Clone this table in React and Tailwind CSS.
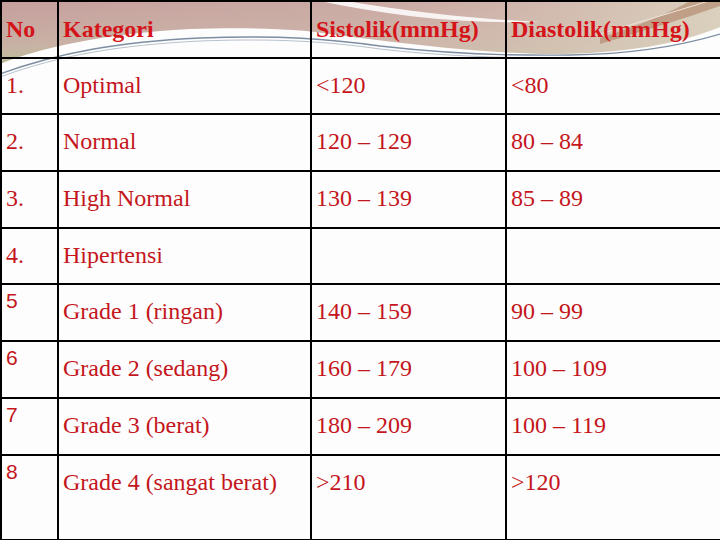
import React from "react";

const rows = [
  { no: "1.", kat: "Optimal", sis: "<120", dia: "<80", h: 56 },
  { no: "2.", kat: "Normal", sis: "120 – 129", dia: "80 – 84", h: 57 },
  { no: "3.", kat: "High Normal", sis: "130 – 139", dia: "85 – 89", h: 57 },
  { no: "4.", kat: "Hipertensi", sis: "", dia: "", h: 56 },
  { no: "5", kat: "Grade 1 (ringan)", sis: "140 – 159", dia: "90 – 99", h: 57, sans: true },
  { no: "6", kat: "Grade 2 (sedang)", sis: "160 – 179", dia: "100 – 109", h: 57, sans: true },
  { no: "7", kat: "Grade 3 (berat)", sis: "180 – 209", dia: "100 – 119", h: 57, sans: true },
  { no: "8", kat: "Grade 4 (sangat berat)", sis: ">210", dia: ">120", h: 85, sans: true },
];

// header swoosh from the slide theme
function HeaderWave() {
  return (
    <svg
      className="absolute left-0 top-0"
      width="720"
      height="80"
      viewBox="0 0 720 80"
    >
      <defs>
        <linearGradient id="band" x1="0" y1="0" x2="0" y2="1">
          <stop offset="0" stopColor="#c69e9c" />
          <stop offset="0.55" stopColor="#c8b0a4" />
          <stop offset="1" stopColor="#b4c98f" />
        </linearGradient>
        <linearGradient id="side" x1="0" y1="0" x2="1" y2="0">
          <stop offset="0" stopColor="#d9cfc0" stopOpacity="0" />
          <stop offset="0.55" stopColor="#d8c4b8" stopOpacity="0.3" />
          <stop offset="1" stopColor="#dcd5c0" stopOpacity="0.9" />
        </linearGradient>
      </defs>
      <rect x="0" y="0" width="720" height="80" fill="url(#band)" />
      <rect x="0" y="0" width="720" height="80" fill="url(#side)" />
      <path
        d="M315,0 L340,0 C400,10 460,18 540,22 C460,24 390,16 315,0 Z"
        fill="#ffffff"
        opacity="0.85"
      />
      <path
        d="M0,64 C40,48 100,34 190,29 C250,27 300,29 330,34 C400,43 470,52 540,54 C620,55 680,44 720,27 L720,80 L0,80 Z"
        fill="#fdfdfd"
      />
      <path
        d="M0,74 C60,52 120,42 200,38 C280,35 330,39 380,46 C440,53 500,56 570,55 C630,54 680,46 720,34"
        fill="none"
        stroke="#7d8ea2"
        strokeWidth="1.3"
      />
      <path
        d="M0,77 C60,55 120,45 200,41 C280,38 330,42 380,49 C440,56 500,58 560,58"
        fill="none"
        stroke="#b8c2cc"
        strokeWidth="1"
      />
      <path
        d="M692,0 L720,0 L720,6 C680,20 640,32 600,44 L600,38 C640,25 670,13 692,0 Z"
        fill="#b58d72"
        opacity="0.7"
      />
      <path
        d="M600,34 C640,22 680,10 712,0"
        fill="none"
        stroke="#eee4dc"
        strokeWidth="1"
      />
    </svg>
  );
}

export default function App() {
  const serif = { fontFamily: '"Liberation Serif", "Times New Roman", serif' };

  return (
    <div className="relative w-[720px] h-[540px] overflow-hidden bg-[#fdfdfd]">

      <HeaderWave />

      <table
        className="relative table-fixed border-collapse w-[720px] text-[24px] leading-[27px]"
        style={serif}
      >
        <colgroup>
          <col className="w-[57px]" />
          <col className="w-[253px]" />
          <col className="w-[195px]" />
          <col className="w-[215px]" />
        </colgroup>

        <thead>
          <tr className="h-[57px]">
            {["No", "Kategori", "Sistolik(mmHg)", "Diastolik(mmHg)"].map((t) => (
              <th
                key={t}
                className="border-2 border-black pl-1 text-left align-middle font-bold text-[#d5141a] whitespace-nowrap"
              >
                {t}
              </th>
            ))}
          </tr>
        </thead>

        <tbody>
          {rows.map((r) => (
            <tr key={r.no} style={{ height: r.h }}>
              <td className="border-2 border-black pl-1 align-top text-[#c4161c]">
                {r.sans ? (
                  <div
                    className="pt-[4px] text-[21px] leading-[23px]"
                    style={{ fontFamily: '"Liberation Sans", Arial, sans-serif' }}
                  >
                    {r.no}
                  </div>
                ) : (
                  <div className="pt-[13px]">{r.no}</div>
                )}
              </td>
              <td className="border-2 border-black pl-1 align-top text-[#c4161c] whitespace-nowrap">
                <div className="pt-[13px]">{r.kat}</div>
              </td>
              <td className="border-2 border-black pl-1 align-top text-[#c4161c] whitespace-nowrap">
                <div className="pt-[13px]">{r.sis}</div>
              </td>
              <td className="border-2 border-black pl-1 align-top text-[#c4161c] whitespace-nowrap">
                <div className="pt-[13px]">{r.dia}</div>
              </td>
            </tr>
          ))}
        </tbody>
      </table>

    </div>
  );
}
